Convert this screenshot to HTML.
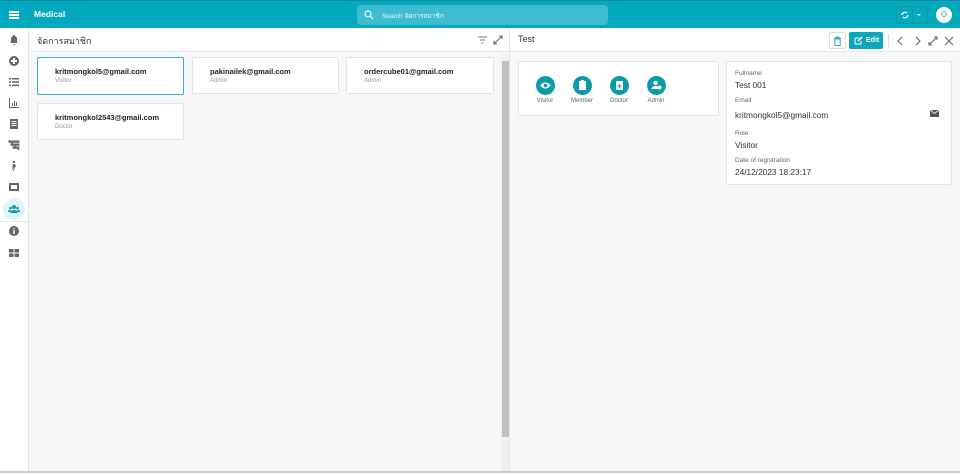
<!DOCTYPE html>
<html><head><meta charset="utf-8"><style>
*{box-sizing:border-box;margin:0;padding:0}
body{width:960px;height:473px;overflow:hidden;background:#f6f7f9;font-family:"Liberation Sans","Noto Sans CJK SC",sans-serif;position:relative;color:#333}
.top{position:absolute;left:0;top:0;width:960px;height:28px;background:#03a9bf;border-top:1px solid #0a8c9c}
.side{position:absolute;left:0;top:28px;width:29px;height:445px;background:#fff;border-right:1px solid #e2e4e8}
.ic{position:absolute;left:8px;width:12px;height:12px;fill:#666}
.ph{position:absolute;top:28px;height:24px;background:#fff;border-bottom:1px solid #e4e6ea}
.card{position:absolute;background:#fff;border:1px solid #e2e4e8;border-radius:2px}
.card b{position:absolute;left:17px;top:9px;font-size:7.5px;color:#222}
.card span{position:absolute;left:17px;top:20px;font-size:6px;color:#999}
.lbl{position:absolute;font-size:6.5px;color:#666}
.val{position:absolute;font-size:8.3px;color:#333}
.circ{position:absolute;top:76px;width:19px;height:19px;border-radius:50%;background:#0c9aab}
.rl{position:absolute;top:98px;font-size:6px;color:#666;width:40px;text-align:center}
</style></head><body>
<div class="top">
 <div style="position:absolute;left:9px;top:10px;width:10px;height:1.5px;background:#fff;box-shadow:0 3px 0 #fff,0 6px 0 #fff"></div>
 <div style="position:absolute;left:34px;top:8px;color:#fff;font-size:8.5px;font-weight:bold">Medical</div>
 <div style="position:absolute;left:357px;top:4px;width:251px;height:20px;background:#3fbdd0;border-radius:4px">
  <svg style="position:absolute;left:7px;top:5px" width="10" height="10" viewBox="0 0 10 10"><circle cx="4" cy="4" r="3" fill="none" stroke="#dff" stroke-width="1.2"/><path d="M6.2 6.2L9 9" stroke="#dff" stroke-width="1.2"/></svg>
  <div style="position:absolute;left:25px;top:6px;font-size:6.5px;color:#e5f7fa">Search จัดการสมาชิก</div>
 </div>
 <div style="position:absolute;left:896px;top:5px;width:32px;height:18px;border:1px solid #1a93a3;border-radius:3px"><div style="position:absolute;left:15px;top:0;width:1px;height:16px;background:#1a93a3"></div>
 <svg style="position:absolute;left:3px;top:3px" width="10" height="10" viewBox="0 0 10 10"><path d="M2 5a3 3 0 0 1 5-2M8 5a3 3 0 0 1-5 2" stroke="#fff" fill="none" stroke-width="1.2"/></svg>
 <div style="position:absolute;left:20px;top:7px;border:2.5px solid transparent;border-top-color:#fff"></div></div>
 <div style="position:absolute;left:936px;top:6px;width:16px;height:16px;border-radius:50%;background:#fff;color:#0aa;font-size:8px;text-align:center;line-height:16px">O</div>
</div>
<div class="side">
 <svg class="ic" style="top:6px" viewBox="0 0 12 12"><path d="M6 1a1 1 0 0 1 1 1a3 3 0 0 1 2 3v3l1 1H2l1-1V5a3 3 0 0 1 2-3a1 1 0 0 1 1-1zM5 10h2a1 1 0 0 1-2 0z"/></svg>
 <svg class="ic" style="top:27px" viewBox="0 0 12 12"><circle cx="6" cy="6" r="5"/><path d="M5 3h2v2h2v2H7v2H5V7H3V5h2z" fill="#fff"/></svg>
 <svg class="ic" style="top:48px" viewBox="0 0 12 12"><path d="M1 2h2v1.5H1zM4 2h7v1.5H4zM1 5.3h2v1.5H1zM4 5.3h7v1.5H4zM1 8.6h2v1.5H1zM4 8.6h7v1.5H4z"/></svg>
 <svg class="ic" style="top:69px" viewBox="0 0 12 12"><path d="M1 1h1v9h9v1H1zM4 6h1v3H4zM6 4h1v5H6zM8 5h1v4H8z"/></svg>
 <svg class="ic" style="top:90px" viewBox="0 0 12 12"><path d="M2 1h8v10H2z"/><path d="M3.5 3h5v1h-5zM3.5 5h5v1h-5zM3.5 7h5v1h-5z" fill="#fff"/></svg>
 <svg class="ic" style="top:111px" viewBox="0 0 12 12"><path d="M1 2h10v1.2H1zM3 5h8v1.2H3zM5 8h6v1.2H5zM1 1l10 10" stroke="#666"/></svg>
 <svg class="ic" style="top:132px" viewBox="0 0 12 12"><circle cx="6" cy="2" r="1.2"/><path d="M5 4h2l1 3-1 0-1 4H5l1-4-2 3z"/></svg>
 <svg class="ic" style="top:153px" viewBox="0 0 12 12"><path d="M1 2h10v8H1z"/><path d="M3 4h6v4H3z" fill="#fff"/></svg>
 <div style="position:absolute;left:3px;top:170px;width:22px;height:22px;border-radius:50%;background:#dff4f7"></div>
 <svg class="ic" style="top:175px;fill:#0c9aab" viewBox="0 0 12 12"><circle cx="6" cy="4" r="2"/><circle cx="2.5" cy="5" r="1.3"/><circle cx="9.5" cy="5" r="1.3"/><path d="M2 10a4 3 0 0 1 8 0zM0 9a2 2 0 0 1 3-2l-1 2zM12 9a2 2 0 0 0-3-2l1 2z"/></svg>
 <div style="position:absolute;left:0;top:193px;width:29px;height:1px;background:#e4e6ea"></div>
 <svg class="ic" style="top:197px" viewBox="0 0 12 12"><circle cx="6" cy="6" r="5"/><path d="M5.3 5h1.4v4H5.3zM5.3 3h1.4v1.3H5.3z" fill="#fff"/></svg>
 <svg class="ic" style="top:219px" viewBox="0 0 12 12"><path d="M1 2h4.5v3.5H1zM6.5 2H11v3.5H6.5zM1 6.5h4.5V10H1zM6.5 6.5H11V10H6.5z"/></svg>
</div>
<div class="ph" style="left:30px;width:479px">
 <div style="position:absolute;left:7px;top:6px;font-size:9px;color:#333">จัดการสมาชิก</div>
 <svg style="position:absolute;left:448px;top:8px" width="9" height="8" viewBox="0 0 9 8"><path d="M0 1h9M2 4h5M3.5 7h2" stroke="#777"/></svg>
 <svg style="position:absolute;left:463px;top:7px" width="10" height="10" viewBox="0 0 10 10"><path d="M1 9L9 1M6 1h3v3M1 6v3h3" stroke="#666" fill="none" stroke-width="1.1"/></svg>
</div>
<div style="position:absolute;left:509px;top:28px;width:1px;height:445px;background:#e2e4e8"></div>
<div class="card" style="left:37px;top:57px;width:147px;height:38px;border:1.5px solid #3fb0bf"><b>kritmongkol5@gmail.com</b><span>Visitor</span></div>
<div class="card" style="left:192px;top:57px;width:147px;height:37px"><b>pakinailek@gmail.com</b><span>Admin</span></div>
<div class="card" style="left:346px;top:57px;width:148px;height:37px"><b>ordercube01@gmail.com</b><span>Admin</span></div>
<div class="card" style="left:37px;top:103px;width:147px;height:37px"><b>kritmongkol2543@gmail.com</b><span>Doctor</span></div>
<div style="position:absolute;left:501px;top:54px;width:8px;height:418px;background:#f0f0f0"></div>
<div style="position:absolute;left:502px;top:61px;width:7px;height:376px;background:#c1c1c1"></div>
<div style="position:absolute;left:0;top:471px;width:960px;height:2px;background:#ccc"></div>
<div class="ph" style="left:510px;width:450px">
 <div style="position:absolute;left:8px;top:6px;font-size:9px;color:#333">Test</div>
 <div style="position:absolute;left:319px;top:4px;width:17px;height:17px;border:1px solid #ddd;border-radius:2px">
  <svg style="position:absolute;left:3px;top:3px" width="9" height="10" viewBox="0 0 9 10"><path d="M1 2h7M3 1h3M1.8 3h5.4v6.5H1.8z" stroke="#3aa8b8" fill="none"/></svg></div>
 <div style="position:absolute;left:339px;top:4px;width:34px;height:17px;background:#0fa6bb;border-radius:2px;color:#fff;font-size:7px;font-weight:bold;line-height:17px;padding-left:17px">Edit
  <svg style="position:absolute;left:5px;top:4px" width="9" height="9" viewBox="0 0 9 9"><path d="M1 2h4M1 2v6h6V5" stroke="#fff" fill="none"/><path d="M4 5l4-4" stroke="#fff" stroke-width="1.5"/></svg></div>
 <div style="position:absolute;left:378px;top:6px;width:1px;height:13px;background:#ddd"></div>
 <svg style="position:absolute;left:386px;top:8px" width="70" height="10" viewBox="0 0 70 10"><path d="M6 1L2 5l4 4M20 1l4 4-4 4M33 9l8-8M38 1h3v3M33 6v3h3M49 1l8 8M57 1l-8 8" stroke="#666" fill="none" stroke-width="1.1"/></svg>
</div>
<div class="card" style="left:518px;top:61px;width:201px;height:55px"></div>
<div class="circ" style="left:536px"><svg width="19" height="19" viewBox="0 0 19 19"><path d="M4 9.5q5.5-6 11 0q-5.5 6-11 0z" fill="#fff"/><circle cx="9.5" cy="9.5" r="1.7" fill="#0c9aab"/></svg></div>
<div class="circ" style="left:573px"><svg width="19" height="19" viewBox="0 0 19 19"><path d="M6 5h7v9H6z" fill="#fff"/><path d="M8 4h3v2H8z" fill="#fff"/></svg></div>
<div class="circ" style="left:610px"><svg width="19" height="19" viewBox="0 0 19 19"><path d="M6 5h7v9H6z" fill="#fff"/><path d="M9 8h1v4H9zM7.5 9.5h4v1h-4z" fill="#0c9aab"/></svg></div>
<div class="circ" style="left:647px"><svg width="19" height="19" viewBox="0 0 19 19"><circle cx="8.5" cy="7" r="2.2" fill="#fff"/><path d="M4.5 13a4 3 0 0 1 7-2v2z" fill="#fff"/><circle cx="12.5" cy="11.5" r="2" fill="#fff"/></svg></div>
<div class="rl" style="left:525px">Visitor</div>
<div class="rl" style="left:562px">Member</div>
<div class="rl" style="left:599px">Doctor</div>
<div class="rl" style="left:636px">Admin</div>
<div class="card" style="left:726px;top:61px;width:226px;height:124px"></div>
<div class="lbl" style="left:735px;top:70px">Fullname</div>
<div class="val" style="left:735px;top:80px">Test 001</div>
<div class="lbl" style="left:735px;top:97px">Email</div>
<div class="val" style="left:735px;top:110px">kritmongkol5@gmail.com</div>
<svg style="position:absolute;left:930px;top:110px" width="9" height="7" viewBox="0 0 9 7"><path d="M0 0h9v7H0z" fill="#555"/><path d="M0 0l4.5 3.5L9 0" stroke="#fff" fill="none" stroke-width=".8"/></svg>
<div class="lbl" style="left:735px;top:130px">Role</div>
<div class="val" style="left:735px;top:140px">Visitor</div>
<div class="lbl" style="left:735px;top:157px">Date of registration</div>
<div class="val" style="left:735px;top:167px">24/12/2023 18:23:17</div>
</body></html>
